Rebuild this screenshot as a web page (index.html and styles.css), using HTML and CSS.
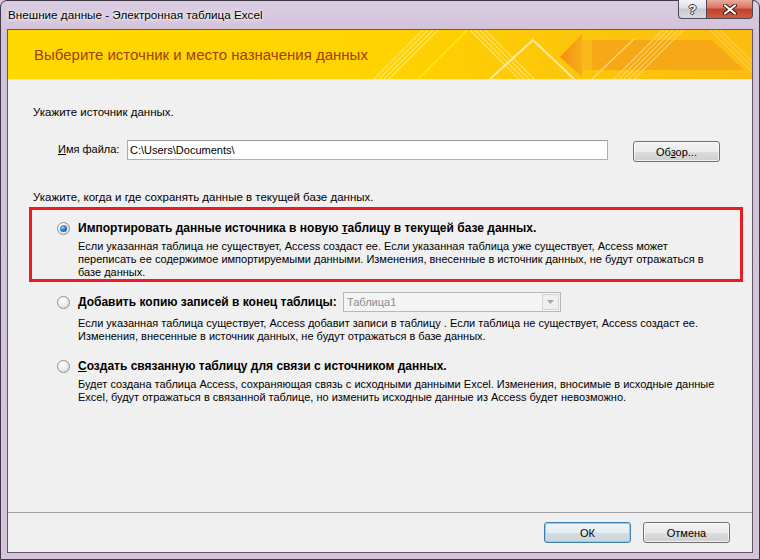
FILE: index.html
```html
<!DOCTYPE html>
<html lang="ru">
<head>
<meta charset="utf-8">
<title>Внешние данные - Электронная таблица Excel</title>
<link rel="stylesheet" href="styles.css">
</head>
<body>
<div class="window">
  <div class="titlebar">
    <span class="title">Внешние данные - Электронная таблица Excel</span>
    <div class="caption-btns">
      <span class="cap help">?</span>
      <span class="cap close">
        <svg width="14" height="11" viewBox="0 0 14 11" aria-hidden="true">
          <path d="M2 1.5 L12 9.5 M12 1.5 L2 9.5" stroke="#3a1a14" stroke-width="4" stroke-linecap="round"/>
          <path d="M2 1.5 L12 9.5 M12 1.5 L2 9.5" stroke="#ffffff" stroke-width="2.2" stroke-linecap="round"/>
        </svg>
      </span>
    </div>
  </div>
  <div class="client">
    <div class="banner">
      <svg class="banner-art" width="744" height="49" viewBox="0 0 744 49" aria-hidden="true">
        <defs>
          <linearGradient id="bg" x1="0" x2="1" y1="0" y2="0">
            <stop offset="0" stop-color="#ffd900"/>
            <stop offset="0.5" stop-color="#ffd300"/>
            <stop offset="0.75" stop-color="#fdc60a"/>
            <stop offset="1" stop-color="#fbbd10"/>
          </linearGradient>
          <linearGradient id="arr" x1="0" x2="1" y1="0" y2="0">
            <stop offset="0" stop-color="#f28f14"/>
            <stop offset="1" stop-color="#f7ad18"/>
          </linearGradient>
        </defs>
        <rect width="744" height="49" fill="url(#bg)"/>
        <g stroke="#ffec8c" stroke-width="1.2" opacity="0.75">
          <line x1="366" y1="49" x2="415" y2="0"/>
          <line x1="371" y1="49" x2="420" y2="0"/>
          <line x1="376" y1="49" x2="425" y2="0"/>
          <line x1="381" y1="49" x2="430" y2="0"/>
        </g>
        <line x1="410" y1="49" x2="459" y2="0" stroke="#ffe600" stroke-width="2"/>
        <g stroke="#ffe896" stroke-width="1.2" opacity="0.75">
          <line x1="462" y1="0" x2="511" y2="49"/>
          <line x1="467" y1="0" x2="516" y2="49"/>
          <line x1="472" y1="0" x2="521" y2="49"/>
          <line x1="477" y1="0" x2="526" y2="49"/>
        </g>
        <polyline points="482,49 525,10 566,49" fill="none" stroke="#ffeaa0" stroke-width="2"/>
        <polygon points="552,27 574,4 574,47" fill="url(#arr)"/>
        <rect x="574" y="10" width="10" height="30" fill="#f9b91c"/>
        <polygon points="584,10 704,10 736,40 584,40" fill="#f6a816"/>
        <line x1="584" y1="49" x2="626" y2="9" stroke="#ffe07a" stroke-width="1.5" opacity="0.8"/>
        <g stroke="#ffdc78" stroke-width="1.2" opacity="0.75">
          <line x1="606" y1="49" x2="655" y2="0"/>
          <line x1="611" y1="49" x2="660" y2="0"/>
          <line x1="616" y1="49" x2="665" y2="0"/>
          <line x1="621" y1="49" x2="670" y2="0"/>
          <line x1="626" y1="49" x2="675" y2="0"/>
        </g>
        <g stroke="#ffd870" stroke-width="1.2" opacity="0.6">
          <line x1="702" y1="0" x2="751" y2="49"/>
          <line x1="707" y1="0" x2="756" y2="49"/>
          <line x1="712" y1="0" x2="761" y2="49"/>
        </g>
      </svg>
      <h1 class="banner-title">Выберите источник и место назначения данных</h1>
    </div>

    <div class="content">
      <p class="section">Укажите источник данных.</p>
      <div class="file-row">
        <label class="file-label"><u>И</u>мя файла:</label>
        <div class="textbox">C:\Users\Documents\</div>
        <button class="btn browse">Об<u>з</u>ор...</button>
      </div>
      <p class="section section2">Укажите, когда и где сохранять данные в текущей базе данных.</p>

      <div class="option opt1 highlight">
        <div class="opt-head">
          <span class="radio checked"></span>
          <span class="opt-title">Импортировать данные источника в новую <u>т</u>аблицу в текущей базе данных.</span>
        </div>
        <p class="opt-desc">Если указанная таблица не существует, Access создаст ее. Если указанная таблица уже существует, Access может<br>переписать ее содержимое импортируемыми данными. Изменения, внесенные в источник данных, не будут отражаться в<br>базе данных.</p>
      </div>

      <div class="option opt2">
        <div class="opt-head">
          <span class="radio"></span>
          <span class="opt-title opt2-title"><u>Д</u>обавить копию записей в конец таблицы:</span>
          <div class="combo">
            <span class="combo-text">Таблица1</span>
            <span class="combo-arrow">
              <svg width="7" height="4" viewBox="0 0 7 4" aria-hidden="true"><path d="M0 0 H7 L3.5 4 Z" fill="#a8a8a8"/></svg>
            </span>
          </div>
        </div>
        <p class="opt-desc">Если указанная таблица существует, Access добавит записи в таблицу . Если таблица не существует, Access создаст ее.<br>Изменения, внесенные в источник данных, не будут отражаться в базе данных.</p>
      </div>

      <div class="option opt3">
        <div class="opt-head">
          <span class="radio"></span>
          <span class="opt-title"><u>С</u>оздать связанную таблицу для связи с источником данных.</span>
        </div>
        <p class="opt-desc">Будет создана таблица Access, сохраняющая связь с исходными данными Excel. Изменения, вносимые в исходные данные<br>Excel, будут отражаться в связанной таблице, но изменить исходные данные из Access будет невозможно.</p>
      </div>
    </div>

    <div class="footer">
      <button class="btn ok">ОК</button>
      <button class="btn">Отмена</button>
    </div>
  </div>
</div>
</body>
</html>
```

FILE: styles.css
```css
* { box-sizing: border-box; }
html, body { margin: 0; padding: 0; }
body {
  width: 760px;
  height: 560px;
  overflow: hidden;
  background: #d7c6dc;
  font-family: "Liberation Sans", Arial, sans-serif;
  font-size: 11px;
  color: #000;
}
.window {
  width: 760px;
  height: 560px;
  display: flex;
  flex-direction: column;
  padding: 0 6px 6px;
  border: 1px solid #3e3a44;
  border-radius: 7px 7px 0 0;
  background: linear-gradient(180deg, #dacde2 0, #d3c2da 30px, #d6c3da 100%);
}
.titlebar {
  height: 28px;
  flex: none;
  display: flex;
  justify-content: space-between;
  align-items: flex-start;
}
.title {
  font-size: 11.7px;
  line-height: 14px;
  margin: 7px 0 0 1px;
  text-shadow: 0 0 6px #fff, 0 0 3px #fff;
}
.caption-btns {
  display: flex;
  margin-top: -1px;
}
.cap {
  height: 19px;
  display: flex;
  align-items: center;
  justify-content: center;
  border: 1px solid #4b4b55;
  border-top: none;
}
.help {
  width: 28px;
  border-right: none;
  border-radius: 0 0 0 4px;
  background: linear-gradient(#f4f4f6, #dedfe4 45%, #c6c8cf 50%, #d9dbe1);
  color: #fff;
  font-weight: bold;
  font-size: 13px;
  text-shadow: -1px 0 #333, 1px 0 #333, 0 -1px #333, 0 1px #333;
}
.close {
  width: 47px;
  border-radius: 0 0 4px 0;
  background: linear-gradient(#e9ab9c, #d8735f 45%, #c0402c 50%, #d25a41);
}

.client {
  flex: 1;
  min-height: 0;
  display: flex;
  flex-direction: column;
  border: 1px solid #5b5b60;
  background: #f0f0f0;
}
.banner {
  position: relative;
  flex: none;
  height: 50px;
  border-bottom: 1px solid #e6e6e6;
  display: flex;
  align-items: center;
  overflow: hidden;
}
.banner-art {
  position: absolute;
  left: 0;
  top: 0;
}
.banner-title {
  position: relative;
  margin: 0 0 0 26px;
  font-size: 15px;
  line-height: 18px;
  font-weight: normal;
  color: #a1400e;
}

.content {
  flex: none;
  padding: 0 9px 0 25px;
}
.section {
  margin: 24px 0 0;
  line-height: 16px;
  font-size: 11.5px;
}
.section2 { margin-top: 27px; }
.file-row {
  display: flex;
  align-items: flex-start;
  height: 22px;
  margin-top: 20px;
  padding-left: 25px;
}
.file-label {
  width: 69px;
  line-height: 19px;
}
.textbox {
  width: 481px;
  height: 20px;
  border: 1px solid #abadb3;
  border-top-color: #9a9ca3;
  background: #fff;
  padding: 0 2px;
  line-height: 18px;
}
.btn {
  font-family: inherit;
  font-size: 11px;
  color: #000;
  width: 87px;
  height: 21px;
  padding: 0;
  border: 1px solid #707070;
  border-radius: 3px;
  background: linear-gradient(#f2f2f2 0, #ebebeb 50%, #dddddd 51%, #cfcfcf 100%);
  box-shadow: inset 0 0 0 1px rgba(255, 255, 255, 0.7);
}
.browse { margin: 1px 0 0 25px; }
.ok {
  border-color: #3c7fb1;
  box-shadow: inset 0 0 0 1px #8fd0f2;
  background: linear-gradient(#f0f4f7 0, #e6ecf0 50%, #d6dee4 51%, #cad4dc 100%);
}

.option {
  margin-left: -4px;
  border: 3px solid transparent;
  padding-left: 25px;
}
.highlight {
  border-color: #e81c24;
  margin-top: 2px;
  padding-top: 10px;
  height: 75px;
}
.opt-head {
  display: flex;
  align-items: center;
  height: 16px;
}
.radio {
  position: relative;
  flex: none;
  width: 13px;
  height: 13px;
  margin-right: 8px;
  border-radius: 50%;
  border: 1px solid #8e8f8f;
  background: radial-gradient(circle at 35% 30%, #ffffff 0, #f2f2f2 40%, #d0d0d0 100%);
}
.radio.checked::after {
  content: "";
  position: absolute;
  left: 2px;
  top: 2px;
  width: 7px;
  height: 7px;
  border-radius: 50%;
  background: radial-gradient(circle at 40% 35%, #8fd4ff 0, #2a7fcf 45%, #0d3f7a 100%);
}
.opt-title {
  font-weight: bold;
  font-size: 12px;
  line-height: 16px;
  white-space: nowrap;
}
.opt-desc {
  margin: 4px 0 0 21px;
  line-height: 13px;
  white-space: nowrap;
}
.opt2 { padding-top: 7px; }
.opt2 .opt-head { height: 20px; }
.opt2 .opt-desc { margin-top: 5px; }
.opt2-title { width: 265px; }
.opt3 { padding-top: 9px; }

.combo {
  width: 218px;
  height: 20px;
  display: flex;
  align-items: center;
  border: 1px solid #b4b9bf;
  background: #f4f4f4;
  color: #8b8b8b;
  padding-left: 3px;
}
.combo-text { flex: 1; }
.combo-arrow {
  width: 17px;
  height: 16px;
  margin-right: 1px;
  display: flex;
  align-items: center;
  justify-content: center;
  border: 1px solid #d5d5d5;
  background: #efefef;
}

.footer {
  margin-top: auto;
  flex: none;
  height: 40px;
  border-top: 1px solid #a0a0a0;
  display: flex;
  justify-content: flex-end;
  align-items: flex-start;
  gap: 12px;
  padding: 9px 22px 0 0;
}
```
